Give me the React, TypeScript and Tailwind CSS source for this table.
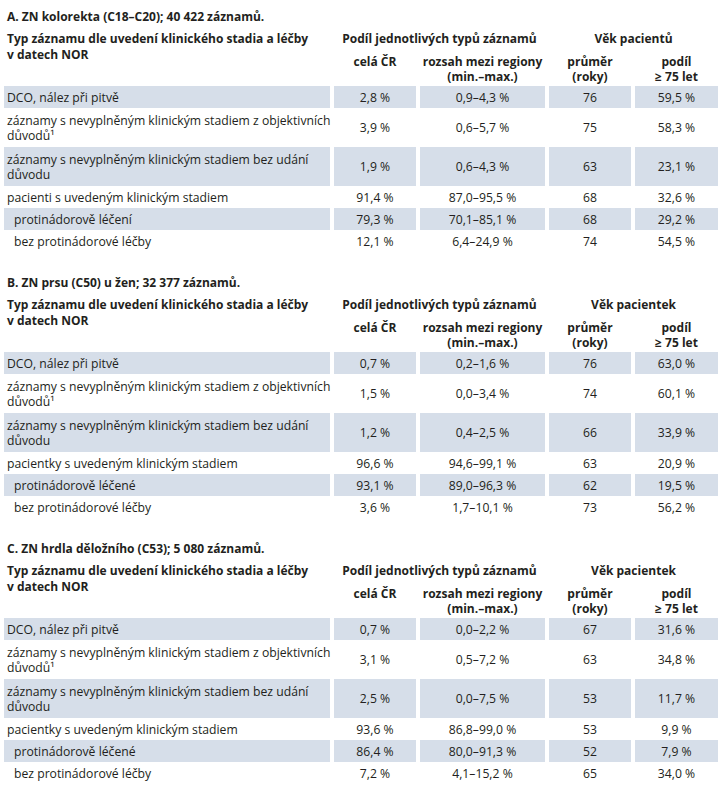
import React from "react";

type Row = {
  label: React.ReactNode;
  indent?: boolean;
  double?: boolean;
  v: [string, string, string, string];
};

type Section = {
  title: string;
  age: string;
  rows: Row[];
};

const objL = (
  <>
    záznamy s nevyplněným klinickým stadiem z objektivních
    <br />
    důvodů¹
  </>
);
const bezL = (
  <>
    záznamy s nevyplněným klinickým stadiem bez udání
    <br />
    důvodu
  </>
);

const sections: Section[] = [
  {
    title: "A. ZN kolorekta (C18–C20); 40 422 záznamů.",
    age: "Věk pacientů",
    rows: [
      { label: "DCO, nález při pitvě", v: ["2,8 %", "0,9–4,3 %", "76", "59,5 %"] },
      { label: objL, double: true, v: ["3,9 %", "0,6–5,7 %", "75", "58,3 %"] },
      { label: bezL, double: true, v: ["1,9 %", "0,6–4,3 %", "63", "23,1 %"] },
      { label: "pacienti s uvedeným klinickým stadiem", v: ["91,4 %", "87,0–95,5 %", "68", "32,6 %"] },
      { label: "protinádorově léčení", indent: true, v: ["79,3 %", "70,1–85,1 %", "68", "29,2 %"] },
      { label: "bez protinádorové léčby", indent: true, v: ["12,1 %", "6,4–24,9 %", "74", "54,5 %"] },
    ],
  },
  {
    title: "B. ZN prsu (C50) u žen; 32 377 záznamů.",
    age: "Věk pacientek",
    rows: [
      { label: "DCO, nález při pitvě", v: ["0,7 %", "0,2–1,6 %", "76", "63,0 %"] },
      { label: objL, double: true, v: ["1,5 %", "0,0–3,4 %", "74", "60,1 %"] },
      { label: bezL, double: true, v: ["1,2 %", "0,4–2,5 %", "66", "33,9 %"] },
      { label: "pacientky s uvedeným klinickým stadiem", v: ["96,6 %", "94,6–99,1 %", "63", "20,9 %"] },
      { label: "protinádorově léčené", indent: true, v: ["93,1 %", "89,0–96,3 %", "62", "19,5 %"] },
      { label: "bez protinádorové léčby", indent: true, v: ["3,6 %", "1,7–10,1 %", "73", "56,2 %"] },
    ],
  },
  {
    title: "C. ZN hrdla děložního (C53); 5 080 záznamů.",
    age: "Věk pacientek",
    rows: [
      { label: "DCO, nález při pitvě", v: ["0,7 %", "0,0–2,2 %", "67", "31,6 %"] },
      { label: objL, double: true, v: ["3,1 %", "0,5–7,2 %", "63", "34,8 %"] },
      { label: bezL, double: true, v: ["2,5 %", "0,0–7,5 %", "53", "11,7 %"] },
      { label: "pacientky s uvedeným klinickým stadiem", v: ["93,6 %", "86,8–99,0 %", "53", "9,9 %"] },
      { label: "protinádorově léčené", indent: true, v: ["86,4 %", "80,0–91,3 %", "52", "7,9 %"] },
      { label: "bez protinádorové léčby", indent: true, v: ["7,2 %", "4,1–15,2 %", "65", "34,0 %"] },
    ],
  },
];

function SectionTable({ s }: { s: Section }) {
  return (
    <div className="mb-[23px]">
      <div className="px-[7px] font-bold text-[12px] leading-[16px] whitespace-nowrap">{s.title}</div>
      <div className="mt-[6px] grid grid-cols-[326px_82px_125px_82px_83px] gap-x-[4px] px-[4px]">
        {/* header */}
        <div className="row-span-2 pl-[3px] font-bold text-[12px] leading-[16px] whitespace-nowrap">
          Typ záznamu dle uvedení klinického stadia a léčby
          <br />
          v datech NOR
        </div>
        <div className="col-span-2 h-[23px] text-center font-bold text-[12px] leading-[16px] whitespace-nowrap">
          Podíl jednotlivých typů záznamů
        </div>
        <div className="col-span-2 h-[23px] text-center font-bold text-[12px] leading-[16px] whitespace-nowrap">
          {s.age}
        </div>
        <div className="text-center font-bold text-[12px] leading-[15px] whitespace-nowrap pb-[2px]">celá ČR</div>
        <div className="text-center font-bold text-[12px] leading-[15px] whitespace-nowrap pb-[2px]">
          rozsah mezi regiony
          <br />
          (min.–max.)
        </div>
        <div className="text-center font-bold text-[12px] leading-[15px] whitespace-nowrap pb-[2px]">
          průměr
          <br />
          (roky)
        </div>
        <div className="text-center font-bold text-[12px] leading-[15px] whitespace-nowrap pb-[2px]">
          podíl
          <br />≥ 75 let
        </div>
        {/* body */}
        {s.rows.map((r, i) => {
          const bg = i % 2 === 0 ? "bg-[#d6dee9]" : "";
          const h = r.double ? "h-[39px]" : "h-[22px]";
          return (
            <React.Fragment key={i}>
              <div
                className={`${bg} ${h} flex items-center whitespace-nowrap text-[12.2px] leading-[15px] ${
                  r.indent ? "pl-[10px]" : "pl-[3px]"
                }`}
              >
                <div>{r.label}</div>
              </div>
              {r.v.map((x, j) => (
                <div
                  key={j}
                  className={`${bg} ${h} flex items-center justify-center whitespace-nowrap text-[12.2px] leading-[15px]`}
                >
                  {x}
                </div>
              ))}
            </React.Fragment>
          );
        })}
      </div>
    </div>
  );
}

export default function App() {
  return (
    <div
      className="w-[726px] h-[800px] overflow-hidden bg-white text-[#231f20] pt-[9px]"
      style={{ fontFamily: '"Open Sans", "Noto Sans", sans-serif' }}
    >
      {sections.map((s, i) => (
        <SectionTable key={i} s={s} />
      ))}
    </div>
  );
}
